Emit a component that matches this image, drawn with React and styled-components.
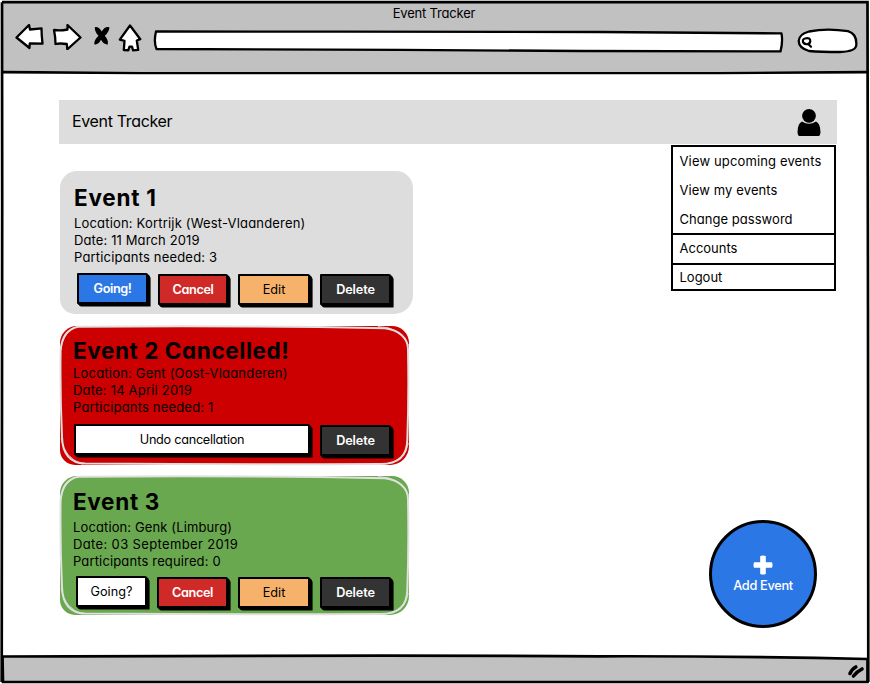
import React from "react";
import styled, { createGlobalStyle } from "styled-components";

const GlobalStyle = createGlobalStyle`
  * { box-sizing: border-box; }
  body { margin: 0; overflow: hidden; }
  button { font: inherit; color: inherit; padding: 0; margin: 0; border: 0; background: none; }
`;

const Window = styled.div`
  position: relative;
  width: 870px;
  height: 684px;
  display: grid;
  grid-template-rows: 71px 1fr 28px;
  background: #fff;
  color: #000;
  font-family: Inter, "Liberation Sans", sans-serif;
  font-feature-settings: "cv11";
  font-size: 13px;
  line-height: 17px;
`;

const FrameOutline = styled.svg`
  position: absolute;
  inset: 0;
  pointer-events: none;
`;

const Chrome = styled.header`
  margin: 2px 2px 0 2px;
  background: #c1c1c1;
  display: grid;
  grid-template-rows: 22px 1fr;
`;

const WindowTitle = styled.div`
  text-align: center;
  line-height: 23px;
  letter-spacing: -0.2px;
  padding-right: 2px;
`;

const Navigation = styled.nav`
  display: flex;
  align-items: flex-start;
`;

const NavIcon = styled.svg`
  display: block;
  flex: none;
  margin-left: ${(p) => p.$gap}px;
  margin-top: ${(p) => p.$drop || 0}px;
  fill: #fff;
  stroke: #000;
  stroke-width: 2.3;
  stroke-linejoin: round;
  stroke-linecap: round;
`;

const Page = styled.main`
  display: flex;
  flex-direction: column;
  padding: 29px 33px 0 59px;
`;

const AppBar = styled.div`
  flex: none;
  height: 44px;
  background: #ddd;
  display: flex;
  align-items: center;
  justify-content: space-between;
  padding: 0 16px 1px 13px;
`;

const AppTitle = styled.h1`
  margin: 0;
  font-size: 16px;
  font-weight: 400;
  letter-spacing: -0.34px;
`;

const Columns = styled.div`
  display: flex;
  justify-content: space-between;
  align-items: flex-start;
`;

const EventList = styled.section`
  padding: 27px 0 0 1px;
`;

const cardHeights = { gray: 143, red: 139, green: 139 };

const Card = styled.article`
  position: relative;
  width: ${(p) => (p.$tone === "gray" ? 353 : 349)}px;
  height: ${(p) => cardHeights[p.$tone]}px;
  margin-bottom: ${(p) => (p.$tone === "gray" ? 12 : 11)}px;
  padding: ${(p) => ({ gray: 14, red: 12, green: 13 })[p.$tone]}px 0 0 ${(p) => (p.$tone === "gray" ? 14 : 13)}px;
  border-radius: 17px 17px 19px 15px;
  background: ${(p) => ({ gray: "#ddd", red: "#c00", green: "#6aa84f" })[p.$tone]};
`;

const CardOutline = styled.svg`
  position: absolute;
  left: 0;
  top: 0;
  overflow: visible;
  fill: none;
  stroke: #e0e0e0;
  stroke-width: 2;
`;

const CardTitle = styled.h2`
  margin: 0 0 ${(p) => p.$below}px;
  font-size: 22.5px;
  line-height: 26px;
  font-weight: 700;
  letter-spacing: ${(p) => p.$track}px;
  white-space: nowrap;
`;

const Detail = styled.div`
  height: 17px;
  letter-spacing: ${(p) => p.$track}px;
  white-space: nowrap;
`;

const Actions = styled.div`
  display: flex;
  gap: 10px;
  padding-left: ${(p) => p.$indent}px;
  margin-top: ${(p) => p.$above}px;
`;

const buttonColors = {
  primary: ["#2c77e6", "#fff"],
  danger: ["#cf2a27", "#fff"],
  warning: ["#f6b26b", "#000"],
  dark: ["#333", "#fff"],
  plain: ["#fff", "#000"],
};

const Button = styled.button`
  flex: none;
  width: ${(p) => p.$width || 71}px;
  height: 31px;
  margin-top: ${(p) => p.$drop || 0}px;
  border: 2px solid #000;
  border-radius: 1px 2px 1px 1px;
  box-shadow: 1px 1px 0 #000, 2px 2px 0 #000, 3px 3px 0 -0.4px #000;
  background: ${(p) => buttonColors[p.$kind][0]};
  color: ${(p) => buttonColors[p.$kind][1]};
  font-size: 12.7px;
  font-weight: ${(p) => (p.$bold ? 600 : 400)};
  line-height: 28px;
  letter-spacing: ${(p) => p.$track || 0}px;
  text-align: center;
`;

const Side = styled.aside`
  height: 484px;
  display: flex;
  flex-direction: column;
  align-items: flex-end;
  justify-content: space-between;
`;

const Menu = styled.ul`
  width: 165px;
  height: 146px;
  margin: 1px 1px 0 0;
  padding: 0;
  list-style: none;
  border: solid #000;
  border-width: 2px 2px 2px 2px;
  background: #fff;
`;

const MenuItem = styled.li`
  height: ${(p) => p.$height || 29}px;
  padding-left: 6.5px;
  line-height: ${(p) => p.$line || 29}px;
  letter-spacing: ${(p) => p.$track}px;
  border-top: ${(p) => (p.$divided ? "2px solid #000" : "0")};
  white-space: nowrap;
`;

const AddButton = styled.button`
  width: 108px;
  height: 108px;
  margin-right: 20px;
  border: 3px solid #000;
  border-radius: 50%;
  background: #2c77e6;
  color: #fff;
  display: flex;
  flex-direction: column;
  align-items: center;
  padding-top: 32px;
  font-size: 12.8px;
  font-weight: 500;
  line-height: 17px;
  letter-spacing: -0.33px;
`;

const PlusIcon = styled.svg`
  display: block;
  margin-bottom: 2px;
`;

const StatusBar = styled.footer`
  margin: 0 2px 2px;
  background: #c1c1c1;
`;

const events = [
  {
    tone: "gray", title: "Event 1", track: 0.75, below: 4, indent: 3, above: 8,
    details: [["Location: Kortrijk (West-Vlaanderen)", 0.18], ["Date: 11 March 2019", 0.12], ["Participants needed: 3", 0.18]],
    actions: [
      { label: "Going!", kind: "primary", bold: true, track: -0.4, drop: -1 },
      { label: "Cancel", kind: "danger", bold: true, track: -0.35, width: 70 },
      { label: "Edit", kind: "warning", width: 72 },
      { label: "Delete", kind: "dark", bold: true, track: -0.1 },
    ],
  },
  {
    tone: "red", title: "Event 2 Cancelled!", track: 0.58, below: 1, indent: 1, above: 8,
    details: [["Location: Gent (Oost-Vlaanderen)", 0.2], ["Date: 14 April 2019", 0.2], ["Participants needed: 1", 0.18]],
    actions: [
      { label: "Undo cancellation", kind: "plain", width: 236, track: -0.28 },
      { label: "Delete", kind: "dark", bold: true, track: -0.1, drop: 1 },
    ],
  },
  {
    tone: "green", title: "Event 3", track: 0.68, below: 4, indent: 3, above: 7,
    details: [["Location: Genk (Limburg)", 0.12], ["Date: 03 September 2019", 0.36], ["Participants required: 0", 0.14]],
    actions: [
      { label: "Going?", kind: "plain", drop: -1 },
      { label: "Cancel", kind: "danger", bold: true, track: -0.35 },
      { label: "Edit", kind: "warning", width: 72 },
      { label: "Delete", kind: "dark", bold: true, track: -0.1 },
    ],
  },
];

function EventCard({ event }) {
  return (
    <Card $tone={event.tone}>
      {event.tone !== "gray" && (
        <CardOutline width="349" height="139" viewBox="0 0 349 139">
          <path d="M18 .8 C110 0 240 .6 325 2.2 C339 4 348 12 348 23 Q349 71 347.3 114 C347 132 336 138 321 138 Q178 138.6 25 137.6 C10 137 2.5 128 2 111 Q0 68 .6 25 C1.5 10 8 3 18 .8Z" />
          <path d="M14 1.5 Q2 9 .8 24 M318 .5 Q341 1 348.5 19 M348.5 117 Q345 136 323 138.6 M1 112 Q4 132 23 138.4" strokeWidth=".8" />
        </CardOutline>
      )}
      <CardTitle $track={event.track} $below={event.below}>{event.title}</CardTitle>
      {event.details.map(([text, track]) => (
        <Detail key={text} $track={track}>{text}</Detail>
      ))}
      <Actions $indent={event.indent} $above={event.above}>
        {event.actions.map((a) => (
          <Button key={a.label} $kind={a.kind} $bold={a.bold} $width={a.width} $drop={a.drop} $track={a.track}>
            {a.label}
          </Button>
        ))}
      </Actions>
    </Card>
  );
}

export default function App() {
  return (
    <>
      <GlobalStyle />
      <Window>
        <Chrome>
          <WindowTitle>Event Tracker</WindowTitle>
          <Navigation>
            <NavIcon $gap={13} width="30" height="26" viewBox="15.5 24 30 26">
              <path d="M17 37.5 L29.5 25 L30.5 29.5 L42 28.3 Q42 35 43 43.6 L30.3 43.3 L30 48 Z" />
            </NavIcon>
            <NavIcon $gap={7} width="31" height="26" viewBox="52 24 31 26">
              <path d="M54 30 Q60 31 67.5 29.5 L67.5 25 L80.5 37.5 L67.3 49.3 L66.8 44 Q60 43 55.5 44 Q55.5 37 54 30Z" />
            </NavIcon>
            <NavIcon $gap={9} width="20" height="26" viewBox="92 24 20 26">
              <path d="M94.8 27.2 Q98.5 26.3 101.8 31.5 Q105 26 109.4 27.3 Q109.6 31.5 104.8 35.8 Q108.8 40.5 107.8 44.4 Q104 45 101 39.8 Q98 45.3 94.3 44.2 Q93.7 40.5 98.5 35.8 Q94.7 31.8 94.8 27.2Z" fill="#000" stroke="none" />
            </NavIcon>
            <NavIcon $gap={6} width="24" height="28" viewBox="118 23 24 28">
              <path d="M119.8 38.6 L130 24.5 L140.3 38.2 L136.8 39.5 L138.2 48.8 L133 49.3 L132 45.6 L129.5 45.6 L128.3 49.3 L123.8 49 L124.5 39.8 Z" />
            </NavIcon>
            <NavIcon $gap={11} $drop={6} width="632" height="23" viewBox="153 30 632 23">
              <path d="M156 31.5 L340 31.6 L600 32 L781.5 33.4 Q783 42 780.5 51.4 L580 51 L400 49.8 L156.5 49 Q153.5 42 156 31.5Z" />
            </NavIcon>
            <NavIcon $gap={11} $drop={3} width="62" height="27" viewBox="796 27 62 27">
              <path d="M809 31.5 Q827 28 848 31.2 Q857 34 856.3 45 Q856 51.5 840 52 Q820 52 809 51 Q798.8 48 798.7 41 Q799 34 809 31.5Z" />
              <path d="M805 38.5 Q810.5 37 810.3 41.2 Q809.7 44.6 806.2 44.2 Q802.2 43.4 803 40 Q803.4 38.8 805 38.5Z M808.5 44.2 L811 46.8" strokeWidth="2.2" />
            </NavIcon>
          </Navigation>
        </Chrome>
        <Page>
          <AppBar>
            <AppTitle>Event Tracker</AppTitle>
            <svg width="24" height="28" viewBox="797 107.5 24 28">
              <circle cx="809" cy="115.3" r="6.9" />
              <path d="M802 121 Q809 125.4 816 121 Q820.5 123 820.5 132 Q820.3 136 817 136 L801 136 Q797.7 136 797.5 132 Q797.5 123 802 121Z" />
            </svg>
          </AppBar>
          <Columns>
            <EventList>
              {events.map((e) => <EventCard key={e.title} event={e} />)}
            </EventList>
            <Side>
              <Menu>
                <MenuItem $track={0.14}>View upcoming events</MenuItem>
                <MenuItem $track={0.11}>View my events</MenuItem>
                <MenuItem $track={0.04} $height={28}>Change password</MenuItem>
                <MenuItem $track={0} $height={30} $line={27} $divided>Accounts</MenuItem>
                <MenuItem $track={0} $height={26} $line={25} $divided>Logout</MenuItem>
              </Menu>
              <AddButton>
                <PlusIcon width="20" height="20" viewBox="0 0 20 20" fill="#fff">
                  <path d="M7.2 1 Q10 0 12.8 1 V7.2 H19 Q20 10 19 12.8 H12.8 V19 Q10 20 7.2 19 V12.8 H1 Q0 10 1 7.2 H7.2Z" />
                </PlusIcon>
                Add Event
              </AddButton>
            </Side>
          </Columns>
        </Page>
        <StatusBar />
        <FrameOutline width="870" height="684" viewBox="0 0 870 684" fill="none" stroke="#000" strokeWidth="2.7">
          <path d="M0 684 V655 H868 V684Z" fill="#fff" stroke="none" />
          <path d="M2.5 656.5 Q420 655 600 656.3 Q740 656 867.5 659 V682 H3Z" fill="#c1c1c1" />
          <path d="M2 2.2 H867.5 L868 310 L868.3 682 M2 2.2 L2.2 200 L1.7 682" />
          <path d="M2 72.2 L140 73 H720 L868 72.2" />
          <path d="M850 673.5 Q852 669 855.8 667 M853.5 676 Q857 671.5 862 669" strokeWidth="3.6" strokeLinecap="round" />
        </FrameOutline>
      </Window>
    </>
  );
}
